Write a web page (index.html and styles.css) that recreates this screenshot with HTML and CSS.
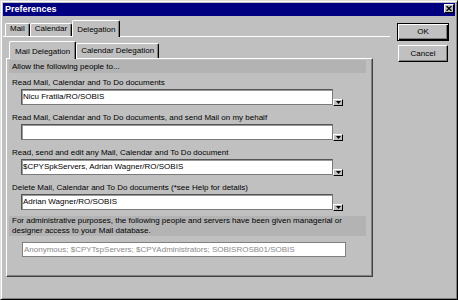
FILE: index.html
```html
<!DOCTYPE html>
<html>
<head>
<meta charset="utf-8">
<title>Preferences</title>
<link rel="stylesheet" href="styles.css">
</head>
<body>
<div class="window">
  <div class="titlebar">
    <span class="title">Preferences</span>
    <span class="close"><svg width="6" height="5" viewBox="0 0 6 5"><path d="M0.5 0 L5.5 5 M5.5 0 L0.5 5" stroke="#000" stroke-width="1.3"/></svg></span>
  </div>
  <div class="content">
    <div class="main">
      <div class="outer-tabs">
        <div class="tab">Mail</div>
        <div class="tab">Calendar</div>
        <div class="tab active">Delegation</div>
      </div>
      <div class="inner">
        <div class="inner-tabs">
          <div class="itab active">Mail Delegation</div>
          <div class="itab cal">Calendar Delegation</div>
        </div>
        <div class="panel">
          <div class="band">Allow the following people to...</div>
          <div class="group first">
            <div class="label">Read Mail, Calendar and To Do documents</div>
            <div class="row"><div class="field">Nicu Fratila/RO/SOBIS</div><div class="drop"><svg width="5" height="3" viewBox="0 0 5 3"><path d="M0 0 H5 L2.5 3 Z" fill="#000"/></svg></div></div>
          </div>
          <div class="group">
            <div class="label">Read Mail, Calendar and To Do documents, and send Mail on my behalf</div>
            <div class="row"><div class="field"></div><div class="drop"><svg width="5" height="3" viewBox="0 0 5 3"><path d="M0 0 H5 L2.5 3 Z" fill="#000"/></svg></div></div>
          </div>
          <div class="group">
            <div class="label">Read, send and edit any Mail, Calendar and To Do document</div>
            <div class="row"><div class="field">$CPYSpkServers, Adrian Wagner/RO/SOBIS</div><div class="drop"><svg width="5" height="3" viewBox="0 0 5 3"><path d="M0 0 H5 L2.5 3 Z" fill="#000"/></svg></div></div>
          </div>
          <div class="group">
            <div class="label">Delete Mail, Calendar and To Do documents (*see Help for details)</div>
            <div class="row"><div class="field">Adrian Wagner/RO/SOBIS</div><div class="drop"><svg width="5" height="3" viewBox="0 0 5 3"><path d="M0 0 H5 L2.5 3 Z" fill="#000"/></svg></div></div>
          </div>
          <div class="band admin">For administrative purposes, the following people and servers have been given managerial or<br>designer access to your Mail database.</div>
          <div class="readonly">Anonymous; $CPYTspServers; $CPYAdministrators; SOBISROSB01/SOBIS</div>
        </div>
      </div>
    </div>
    <div class="buttons">
      <div class="btn default">OK</div>
      <div class="btn">Cancel</div>
    </div>
  </div>
</div>
</body>
</html>
```
FILE: styles.css
```css
html, body {
  margin: 0;
  padding: 0;
  background: #c0c0c0;
}
body {
  font-family: "Liberation Sans", Arial, sans-serif;
  font-size: 8px;
  color: #000;
}
.window {
  width: 458px;
  height: 300px;
  box-sizing: border-box;
  border: 1px solid;
  border-color: #dfdfdf #000 #000 #dfdfdf;
  box-shadow: inset 1px 1px 0 #fff, inset -1px -1px 0 #808080;
  padding: 2px;
  background: #c0c0c0;
}
.titlebar {
  height: 13px;
  background: #000080;
  display: flex;
  align-items: flex-start;
  justify-content: space-between;
  padding: 0 1px 0 2px;
}
.title {
  font-weight: bold;
  font-size: 9px;
  color: #fff;
  line-height: 13px;
}
.close {
  width: 10px;
  height: 9px;
  margin-top: 1px;
  box-sizing: border-box;
  background: #c0c0c0;
  border: 1px solid;
  border-color: #fff #000 #000 #fff;
  display: flex;
  align-items: center;
  justify-content: center;
}
.content {
  display: flex;
}
.main {
  width: 387px;
}
.outer-tabs {
  display: flex;
  align-items: flex-end;
  height: 16px;
  margin-top: 4px;
  padding-left: 2px;
  border-bottom: 1px solid #fff;
}
.tab {
  height: 13px;
  box-sizing: border-box;
  padding: 0 4px;
  line-height: 10px;
  border-top: 1px solid #fff;
  border-left: 1px solid #fff;
  border-right: 1px solid #000;
  box-shadow: inset -1px 0 0 #808080;
  border-top-left-radius: 2px;
  border-top-right-radius: 2px;
  background: #c0c0c0;
  white-space: nowrap;
}
.tab.active {
  height: 17px;
  margin-bottom: -1px;
  padding-top: 4px;
  position: relative;
  z-index: 1;
}
.inner {
  margin: 4px 0 0 3px;
}
.inner-tabs {
  display: flex;
  align-items: flex-end;
  height: 17px;
  padding-left: 3px;
}
.itab {
  height: 15px;
  box-sizing: border-box;
  padding: 2px 5px 0;
  line-height: 10px;
  border-top: 1px solid #fff;
  border-left: 1px solid #fff;
  border-right: 1px solid #000;
  box-shadow: inset -1px 0 0 #808080;
  border-top-left-radius: 2px;
  border-top-right-radius: 2px;
  background: #c0c0c0;
  white-space: nowrap;
}
.itab.cal {
  padding: 2px 4px 0;
}
.itab.active {
  height: 18px;
  margin-bottom: -1px;
  padding-top: 5px;
  position: relative;
  z-index: 1;
}
.panel {
  width: 367px;
  height: 219px;
  box-sizing: border-box;
  border: 1px solid;
  border-color: #fff #404040 #404040 #fff;
  box-shadow: inset -1px -1px 0 #808080;
}
.band {
  margin: 1px 6px 0 2px;
  height: 13px;
  line-height: 13px;
  padding-left: 3px;
  background: #b3b3b3;
  white-space: nowrap;
}
.group {
  margin-top: 7px;
  padding-left: 5px;
}
.group.first {
  margin-top: 4px;
}
.label {
  height: 12px;
  line-height: 12px;
  white-space: nowrap;
}
.row {
  display: flex;
  align-items: flex-end;
  margin-left: 9px;
}
.field {
  width: 312px;
  height: 16px;
  box-sizing: border-box;
  background: #fff;
  border: 1px solid;
  border-color: #555 #7a7a7a #7a7a7a #555;
  box-shadow: inset 1px 1px 0 #9a9a9a;
  line-height: 14px;
  padding-left: 1px;
  white-space: nowrap;
  overflow: hidden;
}
.drop {
  width: 10px;
  height: 7px;
  margin-bottom: -1px;
  box-sizing: border-box;
  background: #c0c0c0;
  border: 1px solid;
  border-color: #fff #000 #000 #fff;
  display: flex;
  align-items: center;
  justify-content: center;
}
.band.admin {
  margin-top: 6px;
  height: 20px;
  line-height: 10px;
}
.readonly {
  margin: 6px 0 0 15px;
  width: 324px;
  height: 15px;
  box-sizing: border-box;
  background: #fff;
  border: 1px solid #808080;
  color: #8a8a8a;
  line-height: 13px;
  padding-left: 1px;
  white-space: nowrap;
  overflow: hidden;
}
.buttons {
  width: 52px;
  margin: 7px 0 0 7px;
  display: flex;
  flex-direction: column;
  align-items: center;
}
.btn {
  width: 50px;
  height: 17px;
  box-sizing: border-box;
  border: 1px solid;
  border-color: #fff #000 #000 #fff;
  box-shadow: inset -1px -1px 0 #808080;
  text-align: center;
  line-height: 15px;
  margin-top: 4px;
}
.btn.default {
  width: 52px;
  height: 18px;
  margin-top: 0;
  border: 1px solid #000;
  box-shadow: inset 1px 1px 0 #fff, inset -1px -1px 0 #000, inset -2px -2px 0 #808080;
  line-height: 16px;
}
```
